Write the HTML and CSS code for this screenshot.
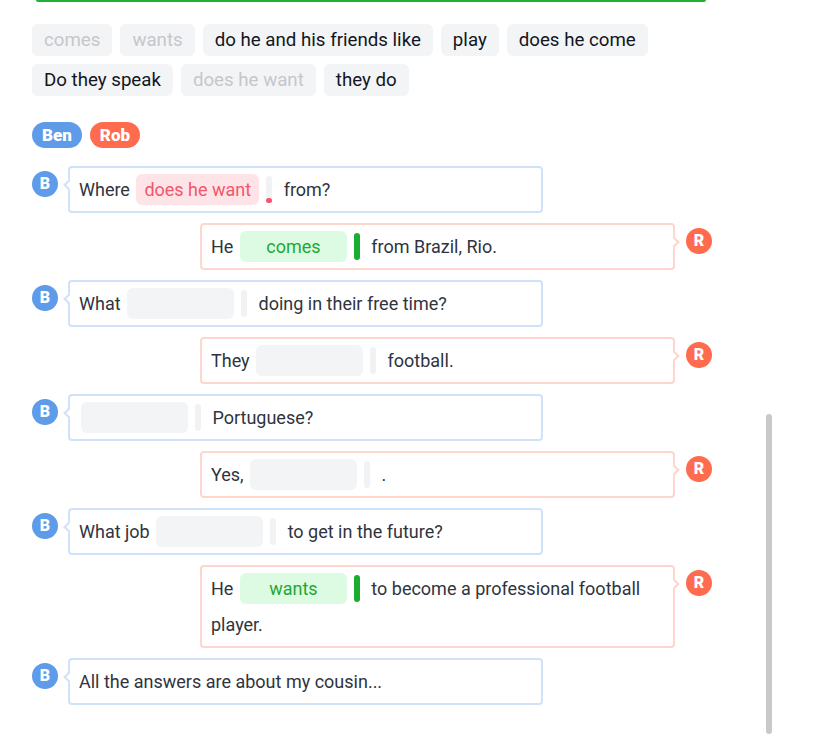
FILE: index.html
```html
<!DOCTYPE html>
<html lang="en">
<head>
<meta charset="utf-8">
<title>Dialogue exercise</title>
<link rel="stylesheet" href="styles.css">
</head>
<body>
<div class="page">
  <div class="green-line"></div>

  <div class="bank">
    <span class="word used">comes</span>
    <span class="word used">wants</span>
    <span class="word">do he and his friends like</span>
    <span class="word">play</span>
    <span class="word">does he come</span>
    <span class="word">Do they speak</span>
    <span class="word used">does he want</span>
    <span class="word">they do</span>
  </div>

  <div class="speakers">
    <span class="pill ben">Ben</span>
    <span class="pill rob">Rob</span>
  </div>

  <div class="chat">
    <div class="row left">
      <span class="avatar ben">B</span>
      <div class="bubble"><span>Where</span> <span class="blank wrong">does he want</span><span class="bar dot"></span> <span>from?</span></div>
    </div>
    <div class="row right">
      <div class="bubble"><span>He</span> <span class="blank right-ans">comes</span><span class="bar ok"></span> <span>from Brazil, Rio.</span></div>
      <span class="avatar rob">R</span>
    </div>
    <div class="row left">
      <span class="avatar ben">B</span>
      <div class="bubble"><span>What</span> <span class="blank"></span><span class="bar"></span> <span>doing in their free time?</span></div>
    </div>
    <div class="row right">
      <div class="bubble"><span>They</span> <span class="blank"></span><span class="bar"></span> <span>football.</span></div>
      <span class="avatar rob">R</span>
    </div>
    <div class="row left">
      <span class="avatar ben">B</span>
      <div class="bubble"><span class="blank"></span><span class="bar"></span> <span>Portuguese?</span></div>
    </div>
    <div class="row right">
      <div class="bubble"><span>Yes,</span> <span class="blank"></span><span class="bar"></span> <span>.</span></div>
      <span class="avatar rob">R</span>
    </div>
    <div class="row left">
      <span class="avatar ben">B</span>
      <div class="bubble"><span>What job</span> <span class="blank"></span><span class="bar"></span> <span>to get in the future?</span></div>
    </div>
    <div class="row right">
      <div class="bubble"><span>He</span> <span class="blank right-ans">wants</span><span class="bar ok"></span> <span>to become a professional football</span> <span>player.</span></div>
      <span class="avatar rob">R</span>
    </div>
    <div class="row left">
      <span class="avatar ben">B</span>
      <div class="bubble"><span>All the answers are about my cousin...</span></div>
    </div>
  </div>

  <div class="scroll-thumb"></div>
</div>
</body>
</html>
```

FILE: styles.css
```css
html, body {
  margin: 0;
  padding: 0;
  background: #ffffff;
}

body {
  font-family: Roboto, "Noto Sans", "Liberation Sans", sans-serif;
  font-size: 18px;
  color: #2f3440;
  width: 821px;
  height: 738px;
  overflow: hidden;
}

.page {
  position: relative;
  padding-left: 32px;
  height: 738px;
}

.green-line {
  margin-left: 4px;
  width: 670px;
  height: 2px;
  background: #1eb136;
  border-radius: 0 0 3px 3px;
}

.bank {
  margin-top: 22px;
  width: 660px;
  display: flex;
  flex-wrap: wrap;
  gap: 8px;
}

.word {
  height: 32px;
  line-height: 32px;
  padding: 0 12px;
  border-radius: 6px;
  background: #f3f4f6;
  color: #121622;
  font-size: 18.7px;
  white-space: nowrap;
}

.word.used {
  color: #c5c7cc;
}

.speakers {
  margin-top: 26px;
  display: flex;
  gap: 8px;
}

.pill {
  height: 26px;
  line-height: 26px;
  padding: 0 10px;
  border-radius: 13px;
  color: #ffffff;
  font-weight: 900;
  font-size: 17px;
}

.pill.ben, .avatar.ben { background: #5e9be9; }
.pill.rob, .avatar.rob { background: #ff6b4e; }

.chat {
  margin-top: 18px;
  width: 680px;
  display: flex;
  flex-direction: column;
  gap: 10px;
}

.row {
  display: flex;
  align-items: flex-start;
}

.row.left { gap: 10px; }
.row.right { gap: 11px; justify-content: flex-end; }

.avatar {
  flex: none;
  width: 26px;
  height: 26px;
  margin-top: 5px;
  border-radius: 50%;
  color: #ffffff;
  font-weight: 900;
  font-size: 16px;
  line-height: 26px;
  text-align: center;
}

.bubble {
  position: relative;
  width: 475px;
  box-sizing: border-box;
  padding: 3.5px 9px;
  line-height: 36px;
  border: 2px solid #d0e2f9;
  border-radius: 4px;
  background: #ffffff;
}

.row.right .bubble {
  border-color: #fdd6cd;
}

.bubble::before {
  content: "";
  position: absolute;
  top: 13px;
  width: 6px;
  height: 6px;
  background: #ffffff;
  transform: rotate(45deg);
}

.row.left .bubble::before {
  left: -5px;
  border-left: 2px solid #d0e2f9;
  border-bottom: 2px solid #d0e2f9;
}

.row.right .bubble::before {
  right: -5px;
  border-right: 2px solid #fdd6cd;
  border-top: 2px solid #fdd6cd;
}

.blank {
  display: inline-block;
  vertical-align: middle;
  box-sizing: border-box;
  min-width: 107px;
  height: 31px;
  line-height: 31px;
  padding: 0 8px;
  margin: -3px 7px 0 2px;
  border-radius: 6px;
  background: #f3f4f6;
  text-align: center;
}

.blank.wrong {
  background: #ffe4e7;
  color: #f2566c;
}

.blank.right-ans {
  background: #dcfbe2;
  color: #1fa834;
}

.bar {
  position: relative;
  display: inline-block;
  vertical-align: middle;
  width: 6px;
  height: 27px;
  margin: -3px 7px 0 0;
  border-radius: 3px;
  background: #f1f2f4;
}

.bar.ok {
  background: #1aad2f;
}

.bar.dot::after {
  content: "";
  position: absolute;
  left: 0;
  bottom: 0;
  width: 6px;
  height: 5px;
  border-radius: 3px;
  background: #f7566a;
}

.scroll-thumb {
  position: absolute;
  left: 766px;
  top: 414px;
  width: 6px;
  height: 320px;
  border-radius: 3px;
  background: #c9c9c9;
}
```
